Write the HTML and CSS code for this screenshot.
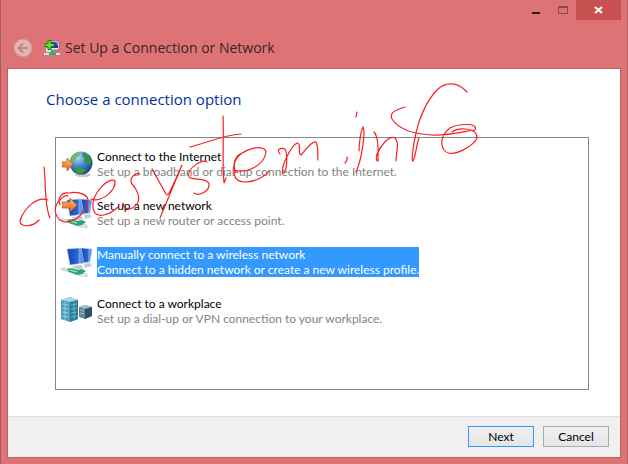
FILE: index.html
```html
<!DOCTYPE html>
<html lang="en">

<head>
    <meta charset="UTF-8">
    <meta name="viewport" content="width=device-width, initial-scale=1.0">
    <title>Set Up a Connection or Network</title>
    <link rel="stylesheet" href="styles.css">
</head>

<body>
    <div class="window">
        <header class="titlebar">
            <div class="controls">
                <button class="control" type="button" aria-label="Minimize">
                    <svg width="10" height="10"><path d="M1 7h8v2H1z" fill="#2b2225" /></svg>
                </button>
                <button class="control" type="button" aria-label="Maximize" disabled>
                    <svg width="10" height="8"><path d="M0 0h10v8H0zM1 2v5h8V2z" fill="#884a4c" fill-rule="evenodd" /></svg>
                </button>
                <button class="control close" type="button" aria-label="Close">
                    <svg width="9" height="8"><path d="M1 1l7 6M8 1L1 7" stroke="#fff" stroke-width="2" /></svg>
                </button>
            </div>
            <div class="caption">
                <button class="back" type="button" aria-label="Back" disabled>
                    <svg width="20" height="20" viewBox="0 0 20 20">
                        <circle cx="10" cy="10" r="9" fill="#eab1b2" stroke="#c99494" stroke-width="1.2" />
                        <path d="M15 10H6M10 5.500L5.500 10l4.500 4.500" fill="none" stroke="#b98687" stroke-width="2" />
                    </svg>
                </button>
                <svg class="app-icon" width="16" height="16" viewBox="0 0 16 16">
                    <path d="M6 1h9v9H6z" fill="#e8e8ee" stroke="#8c4448" stroke-width=".6" />
                    <path d="M7 2h7v6H7z" fill="#2a35a8" />
                    <path d="M11 2h3v4z" fill="#7c8de0" />
                    <path d="M2 8h6v4H2z" fill="#dfe0ea" />
                    <path d="M7 10h3v3h2v2H5v-2h2z" fill="#18b87c" />
                    <path d="M0 13h5v2H0zM12 13h4v2h-4z" fill="#e9e4e8" />
                    <path d="M4 .5h3v3h3v3H7v3H4v-3H1v-3h3z" fill="#69dc31" stroke="#148a10" />
                </svg>
                <span class="caption-text">Set Up a Connection or Network</span>
            </div>
        </header>

        <div class="client">
            <main class="content">
                <h1>Choose a connection option</h1>
                <ul class="options">
                    <li>
                        <button class="option" type="button">
                            <svg class="option-icon" viewBox="0 0 32 32">
                                <defs>
                                    <radialGradient id="sea" cx=".35" cy=".25" r=".8">
                                        <stop offset="0" stop-color="#b9dcff" />
                                        <stop offset=".5" stop-color="#3f86d3" />
                                        <stop offset="1" stop-color="#153d88" />
                                    </radialGradient>
                                    <linearGradient id="arrow" x2="0" y2="1">
                                        <stop offset="0" stop-color="#ffbd7c" />
                                        <stop offset="1" stop-color="#ec6518" />
                                    </linearGradient>
                                </defs>
                                <ellipse cx="22" cy="26" rx="8" ry="2" fill="#c5c8cc" />
                                <circle cx="20" cy="14" r="11.500" fill="url(#sea)" />
                                <path d="M11 7c2-3 5-4 8-4l-1 4-3 2-1 4-5 1c0-3 0-5 2-7z" fill="#6dbb68" />
                                <path d="M22 4c3 0 7 3 8 7l-1 5-3-2-3-1 1-4-3-2z" fill="#37952f" />
                                <path d="M13 20l5-2 5 2 2 2-5 3c-3 0-6-2-7-5z" fill="#3d9c30" />
                                <path d="M1 13h5V9l6 6-6 7v-4H1l1-3z" fill="url(#arrow)" stroke="#b85720" stroke-width=".8" />
                            </svg>
                            <span class="option-text">
                                <span class="option-title">Connect to the Internet</span>
                                <span class="option-note">Set up a broadband or dial-up connection to the Internet.</span>
                            </span>
                        </button>
                    </li>
                    <li>
                        <button class="option" type="button">
                            <svg class="option-icon" viewBox="0 0 32 32">
                                <use href="#monitors" />
                                <path d="M1 4h8V0l7 7-7 7v-4H1l1-3z" fill="url(#arrow)" stroke="#b85720" stroke-width=".8" />
                            </svg>
                            <span class="option-text">
                                <span class="option-title">Set up a new network</span>
                                <span class="option-note">Set up a new router or access point.</span>
                            </span>
                        </button>
                    </li>
                    <li>
                        <button class="option selected" type="button">
                            <svg class="option-icon" viewBox="0 0 32 32">
                                <defs>
                                    <linearGradient id="screen">
                                        <stop offset="0" stop-color="#1740b4" />
                                        <stop offset=".65" stop-color="#2c66d6" />
                                        <stop offset=".7" stop-color="#6fa5ee" />
                                        <stop offset="1" stop-color="#3f7be0" />
                                    </linearGradient>
                                    <g id="monitors">
                                        <path d="M23 17l6-1 2 3-7 2zM11 19l9-1 3 3-8 2z" fill="#c3ccd6" />
                                        <path d="M20 1l11 1-2 13-8 1z" fill="url(#screen)" stroke="#c5d5ea" stroke-width=".6" />
                                        <path d="M6 2l14-1 3 15-14 2z" fill="url(#screen)" stroke="#b4c8e5" stroke-width=".6" />
                                        <path d="M0 21l8 1 1 3-8-2zM18 26l8 1v3l-9-2z" fill="#e4ecef" stroke="#a9b8c0" stroke-width=".6" />
                                        <path d="M6 22l5-1 5 2 5-1 4 2-4 3-5 1-8-3z" fill="#2ba47a" />
                                        <path d="M9 23l7 2" stroke="#8be0bb" stroke-width="1.500" />
                                    </g>
                                </defs>
                                <use href="#monitors" />
                            </svg>
                            <span class="option-text">
                                <span class="option-title">Manually connect to a wireless network</span>
                                <span class="option-note">Connect to a hidden network or create a new wireless profile.</span>
                            </span>
                        </button>
                    </li>
                    <li>
                        <button class="option" type="button">
                            <svg class="option-icon" viewBox="0 0 32 32">
                                <path d="M0 4l9-3 8 3v19l-8 3-9-3z" fill="#4b9dbb" />
                                <path d="M0 4l9-3 8 3-8 2z" fill="#a9d9e8" />
                                <path d="M9 6l8-2v19l-8 3z" fill="#2e7c9d" />
                                <path d="M1 8l7 1M1 12l7 1M1 16l7 1M1 20l7 1M4 6v18" stroke="#8fd0e4" fill="none" />
                                <path d="M10 9l6-1M10 13l6-1M10 17l6-1M10 21l6-1M13 6v17" stroke="#67afc9" fill="none" />
                                <path d="M18 11l6-2 7 2v9l-7 3-6-2z" fill="#5f8798" />
                                <path d="M18 11l6-2 7 2-7 2z" fill="#a4bfca" />
                                <path d="M24 13l7-2v9l-7 3z" fill="#2c5266" />
                                <path d="M19 14l4 1M19 17l4 1" stroke="#9dc2cf" />
                            </svg>
                            <span class="option-text">
                                <span class="option-title">Connect to a workplace</span>
                                <span class="option-note">Set up a dial-up or VPN connection to your workplace.</span>
                            </span>
                        </button>
                    </li>
                </ul>
            </main>
            <footer class="actions">
                <button class="action primary" type="button">Next</button>
                <button class="action" type="button">Cancel</button>
            </footer>
        </div>

        <!-- handwritten signature over the dialog -->
        <svg class="scribble" width="500" height="240" viewBox="0 0 500 240" role="img" aria-label="doesystem.info">
            <path d="M44 167C46 180 44 205 50 218M48 200C37 196 24 208 20 221C20 228 33 227 39 220" />
            <path d="M60 205C57 197 62 192 69 193C80 191 89 195 88 202C86 212 76 222 65 222C55 220 53 209 58 202C62 197 66 195 68 196" />
            <path d="M91 199C102 203 116 190 115 181C109 176 91 194 93 208C95 221 111 214 118 207" />
            <path d="M140 174C134 172 129 179 132 184C137 189 141 198 137 204C133 210 123 211 123 203" />
            <path d="M152 169L166 194C168 197 169 194 182 165M182 165L160 218" />
            <path d="M207 162C204 158 186 168 189 177C193 181 207 177 209 184C210 190 200 197 194 193" />
            <path d="M223 116C224 140 222 165 224 183L226 178M190 147C206 143 224 135 241 134" />
            <path d="M234 170C246 174 264 166 266 152C264 143 241 149 235 161C233 173 233 182 245 182C257 182 266 175 269 171" />
            <path d="M240 154C233 158 233 169 236 172" />
            <path d="M280 154C276 150 280 147 285 149C288 154 287 174 283 173C280 168 291 146 297 143C302 143 297 154 301 155C305 151 311 141 316 142C319 148 317 154 318 160" />
            <path d="M347 157C348 160 346 162 345 163M357 112L356 117" />
            <path d="M359 151C359 143 361 130 363 127C366 132 361 162 356 172" />
            <path d="M374 132C379 138 378 150 378 161C376 161 376 157 377 154C381 145 389 135 395 138C400 143 396 152 396 161" />
            <path d="M467 92C458 82 446 81 437 90C427 100 419 118 416 133C413 146 411 162 413 161C416 156 416 146 419 138" />
            <path d="M405 107C395 110 389 113 392 119C399 130 415 134 431 135C448 136 466 131 475 130C479 122 457 124 450 128C441 135 440 144 444 150C452 160 477 144 477 137C477 128 459 127 452 132" />
        </svg>
    </div>
</body>

</html>
```
FILE: styles.css
```css
* {
    box-sizing: border-box;
    margin: 0;
    padding: 0;
}

body {
    font-family: Lato, "Open Sans", sans-serif;
    font-size: 12px;
    line-height: 15px;
    color: #000;
}

button {
    font: inherit;
    color: inherit;
    border: none;
    background: none;
}

svg {
    display: block;
}

.window {
    position: relative;
    display: flex;
    flex-direction: column;
    min-height: 100vh;
    padding: 0 6px 6px;
    border-left: 1px solid #a65a5d;
    border-right: 1px solid #b95f61;
    background-color: #de7375;
}

.controls {
    display: flex;
    justify-content: flex-end;
}

.control {
    display: flex;
    align-items: center;
    justify-content: center;
    width: 27px;
    height: 20px;
}

.close {
    width: 45px;
    background-color: #c75050;
}

.caption {
    display: flex;
    align-items: center;
    height: 48px;
    padding: 7px 6px 0;
}

.app-icon {
    margin: 0 5px 0 11px;
}

.caption-text {
    font-family: "Open Sans", sans-serif;
    font-size: 14px;
    line-height: 20px;
    color: #3a2528;
}

.client {
    display: flex;
    flex: 1;
    flex-direction: column;
    border: 1px solid #bd6264;
    background-color: #fff;
}

.content {
    display: flex;
    flex: 1;
    flex-direction: column;
    padding: 20px 31px 26px 38px;
}

h1 {
    font-family: "Open Sans", sans-serif;
    font-size: 15px;
    font-weight: 400;
    line-height: 20px;
    color: #003399;
}

.options {
    flex: 1;
    margin: 28px 0 0 9px;
    padding: 11px 5px;
    border: 1px solid #828790;
    list-style: none;
}

.option {
    display: flex;
    align-items: flex-start;
    gap: 4px;
    width: 100%;
    height: 49px;
    text-align: left;
}

.option-icon {
    width: 32px;
    height: 32px;
}

.option-text span {
    display: block;
    white-space: nowrap;
}

.option-note {
    color: #838383;
}

.selected .option-text {
    background-color: #3399ff;
}

.selected .option-text span {
    color: #fff;
}

.actions {
    display: flex;
    justify-content: flex-end;
    gap: 9px;
    padding: 9px 11px 10px;
    border-top: 1px solid #dfdfdf;
    background-color: #f0f0f0;
}

.action {
    width: 66px;
    height: 21px;
    border: 1px solid #acacac;
    background: linear-gradient(#f0f0f0, #e5e5e5);
}

.primary {
    border-color: #3399ff;
}

.scribble {
    position: absolute;
    top: 0;
    left: -1px;
    fill: none;
    stroke: #fa1e20;
    stroke-width: 1.2;
    stroke-linecap: round;
    pointer-events: none;
}
```
